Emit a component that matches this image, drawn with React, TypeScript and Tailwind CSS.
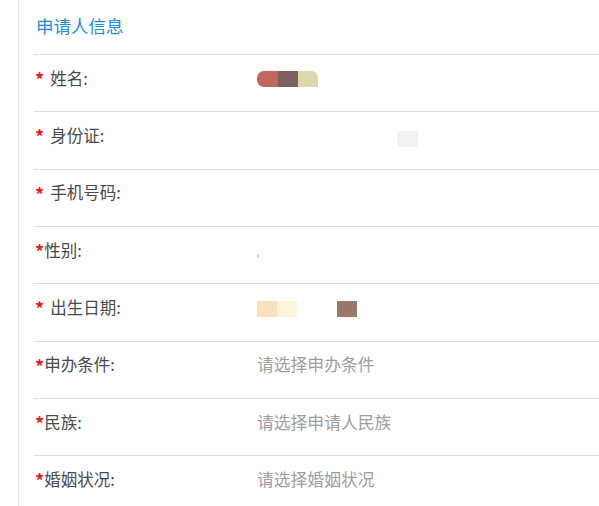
import React from 'react';

type Row = {
  label: string;
  spaced: boolean; // "* 姓名" vs "*性别"
  placeholder?: string;
  value?: React.ReactNode;
};

// redacted data blocks from the screenshot
const NameBlur = () => (
  <div className="flex h-[16px] mt-[2px]">
    <div className="w-[21px] bg-[#c0695b] rounded-l-[7px]" />
    <div className="w-[20px] bg-[#7f6060]" />
    <div className="w-[20px] bg-[#ddd9a9] rounded-tr-[6px]" />
  </div>
);

const IdBlur = () => (
  <div className="ml-[140px] mt-[8px] w-[21px] h-[16px] bg-[#f1f1f1]" />
);

const GenderDot = () => <div className="w-[2px] h-[2px] mt-[12px] bg-[#b8b8b8] rounded-full" />;

const DateBlur = () => (
  <div className="flex h-[16px] mt-[4px]">
    <div className="w-[20px] bg-[#f8e1bb]" />
    <div className="w-[20px] bg-[#fdf4dc]" />
    <div className="w-[40px]" />
    <div className="w-[20px] bg-[#987767]" />
  </div>
);

const rows: Row[] = [
  { label: '姓名', spaced: true, value: <NameBlur /> },
  { label: '身份证', spaced: true, value: <IdBlur /> },
  { label: '手机号码', spaced: true },
  { label: '性别', spaced: false, value: <GenderDot /> },
  { label: '出生日期', spaced: true, value: <DateBlur /> },
  { label: '申办条件', spaced: false, placeholder: '请选择申办条件' },
  { label: '民族', spaced: false, placeholder: '请选择申请人民族' },
  { label: '婚姻状况', spaced: false, placeholder: '请选择婚姻状况' },
];

export default function App() {
  return (
    <div
      className="w-[599px] h-[506px] bg-white overflow-hidden"
      style={{ fontFamily: '"Noto Sans CJK SC", "Noto Sans", sans-serif' }}
    >
      <div className="ml-[18px] h-full border-l border-[#e6e6e6] pl-[15px]">
        {/* section title */}
        <div className="h-[54px] flex items-center pl-[2px] pb-[1px]">
          <span className="text-[17.5px] text-[#1c8ae2]">申请人信息</span>
        </div>

        {rows.map((r) => (
          <div key={r.label} className="h-[57.33px] border-t border-[#dddddd] flex items-center pb-[10px]">
            <div className="w-[223px] pl-[1px] flex items-center text-[16.5px] text-[#4a4a4a] whitespace-nowrap">
              <span className={`text-[#e81f1f] text-[18px] font-bold leading-none mt-[2px] ${r.spaced ? 'mr-[6px]' : 'mr-0'}`}>*</span>
              <span>{r.label}:</span>
            </div>
            <div className="flex-1 flex items-center">
              {r.placeholder ? (
                <span className="text-[16.8px] text-[#9e9e9e]">{r.placeholder}</span>
              ) : (
                r.value
              )}
            </div>
          </div>
        ))}
      </div>
    </div>
  );
}
